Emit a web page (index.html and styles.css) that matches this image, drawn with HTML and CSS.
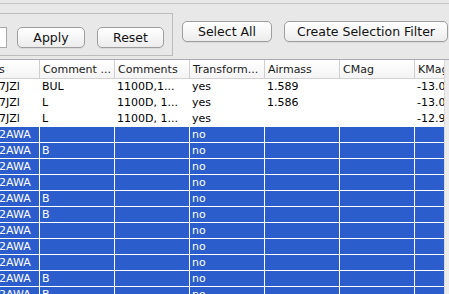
FILE: index.html
```html
<!DOCTYPE html>
<html lang="en">
<head>
    <meta charset="UTF-8">
    <title>Observations</title>
    <link rel="stylesheet" href="styles.css">
</head>
<body>
    <div class="toolbar">
        <div class="filter-box">
            <input type="text" class="filter-field">
            <button class="btn btn-apply">Apply</button>
            <button class="btn btn-reset">Reset</button>
        </div>
        <button class="btn btn-select">Select All</button>
        <button class="btn btn-create">Create Selection Filter</button>
    </div>

    <div class="pane">
        <div class="viewport">
            <div class="row head">
                <div class="cell first">s</div>
                <div class="cell">Comment ...</div>
                <div class="cell">Comments</div>
                <div class="cell">Transform...</div>
                <div class="cell">Airmass</div>
                <div class="cell">CMag</div>
                <div class="cell">KMag</div>
            </div>
            <div id="rows"></div>
        </div>
        <div class="vscroll"></div>
    </div>

    <script>
        // rows: name, comment, comments, transformed, airmass, cmag, kmag, selected
        const data = [
            ['7JZl', 'BUL', '1100D,1...', 'yes', '1.589', '', '-13.06', false],
            ['7JZl', 'L', '1100D, 1...', 'yes', '1.586', '', '-13.04', false],
            ['7JZl', 'L', '1100D, 1...', 'yes', '', '', '-12.97', false],
            ['2AWA', '', '', 'no', '', '', '', true],
            ['2AWA', 'B', '', 'no', '', '', '', true],
            ['2AWA', '', '', 'no', '', '', '', true],
            ['2AWA', '', '', 'no', '', '', '', true],
            ['2AWA', 'B', '', 'no', '', '', '', true],
            ['2AWA', 'B', '', 'no', '', '', '', true],
            ['2AWA', '', '', 'no', '', '', '', true],
            ['2AWA', '', '', 'no', '', '', '', true],
            ['2AWA', '', '', 'no', '', '', '', true],
            ['2AWA', 'B', '', 'no', '', '', '', true],
            ['2AWA', 'B', '', 'no', '', '', '', true]
        ];

        const rows = document.getElementById('rows');
        data.forEach(r => {
            const row = document.createElement('div');
            row.className = r[7] ? 'row selected' : 'row';
            for (let i = 0; i < 7; i++) {
                const cell = document.createElement('div');
                cell.className = i === 0 ? 'cell first' : 'cell';
                cell.textContent = r[i];
                row.appendChild(cell);
            }
            rows.appendChild(row);
        });
    </script>
</body>
</html>
```

FILE: styles.css
```css
body {
    margin: 0;
    background-color: #e8e8e8;
    font-family: "DejaVu Sans", sans-serif;
    overflow: hidden;
    height: 294px;
}
.toolbar {
    margin-top: 3px;
    height: 55px;
    border-top: 1px solid #c6c6c6;
    display: flex;
    align-items: flex-start;
}
.filter-box {
    margin-left: -30px;
    margin-top: 9px;
    padding: 13px 8px 7px 6px;
    border: 1px solid #bcbcbc;
    display: flex;
    align-items: center;
}
.filter-field {
    width: 30px;
    height: 21px;
    box-sizing: border-box;
    margin: 0;
    border: 1px solid #a8a8a8;
    background: white;
}
.btn {
    height: 21px;
    box-sizing: border-box;
    margin: 0;
    padding: 0;
    border: 1px solid #9e9e9e;
    border-radius: 5px;
    background: linear-gradient(#ffffff, #f6f6f6 50%, #ececec);
    box-shadow: 0 1px 0 rgba(0,0,0,0.06);
    font-family: "DejaVu Sans", sans-serif;
    font-size: 12.5px;
    color: #111;
}
.btn-apply {
    width: 68px;
    margin-left: 10px;
}
.btn-reset {
    width: 67px;
    margin-left: 12px;
}
.btn-select {
    width: 90px;
    margin-left: 9px;
    margin-top: 17px;
}
.btn-create {
    width: 164px;
    margin-left: 12px;
    margin-top: 17px;
}
.pane {
    border-top: 1px solid #a9acb4;
    display: flex;
    height: 235px;
}
.viewport {
    width: 444px;
    overflow: hidden;
    background: white;
}
.vscroll {
    flex: 1;
    background: #ececec;
    border-left: 1px solid #dadada;
}
.row {
    display: grid;
    grid-template-columns: 40px repeat(6, 75px);
    height: 16px;
    font-size: 11px;
    line-height: 15px;
    color: #000;
}
.cell {
    border-right: 1px solid white;
    border-bottom: 1px solid white;
    padding-left: 2px;
    white-space: nowrap;
    overflow: hidden;
}
.cell.first {
    padding-left: 0;
    text-indent: -1px;
}
.head {
    height: 19px;
    line-height: 17px;
    background: linear-gradient(#ffffff, #f3f3f3);
    color: #1a1a1a;
}
.head .cell {
    border-right: 1px solid #cfcfcf;
    border-bottom: 1px solid #d2d2d2;
    padding-left: 3px;
    padding-top: 1px;
}
.head .cell.first {
    padding-left: 0;
}
.selected {
    background-color: #2b5ecc;
    color: white;
}
```
